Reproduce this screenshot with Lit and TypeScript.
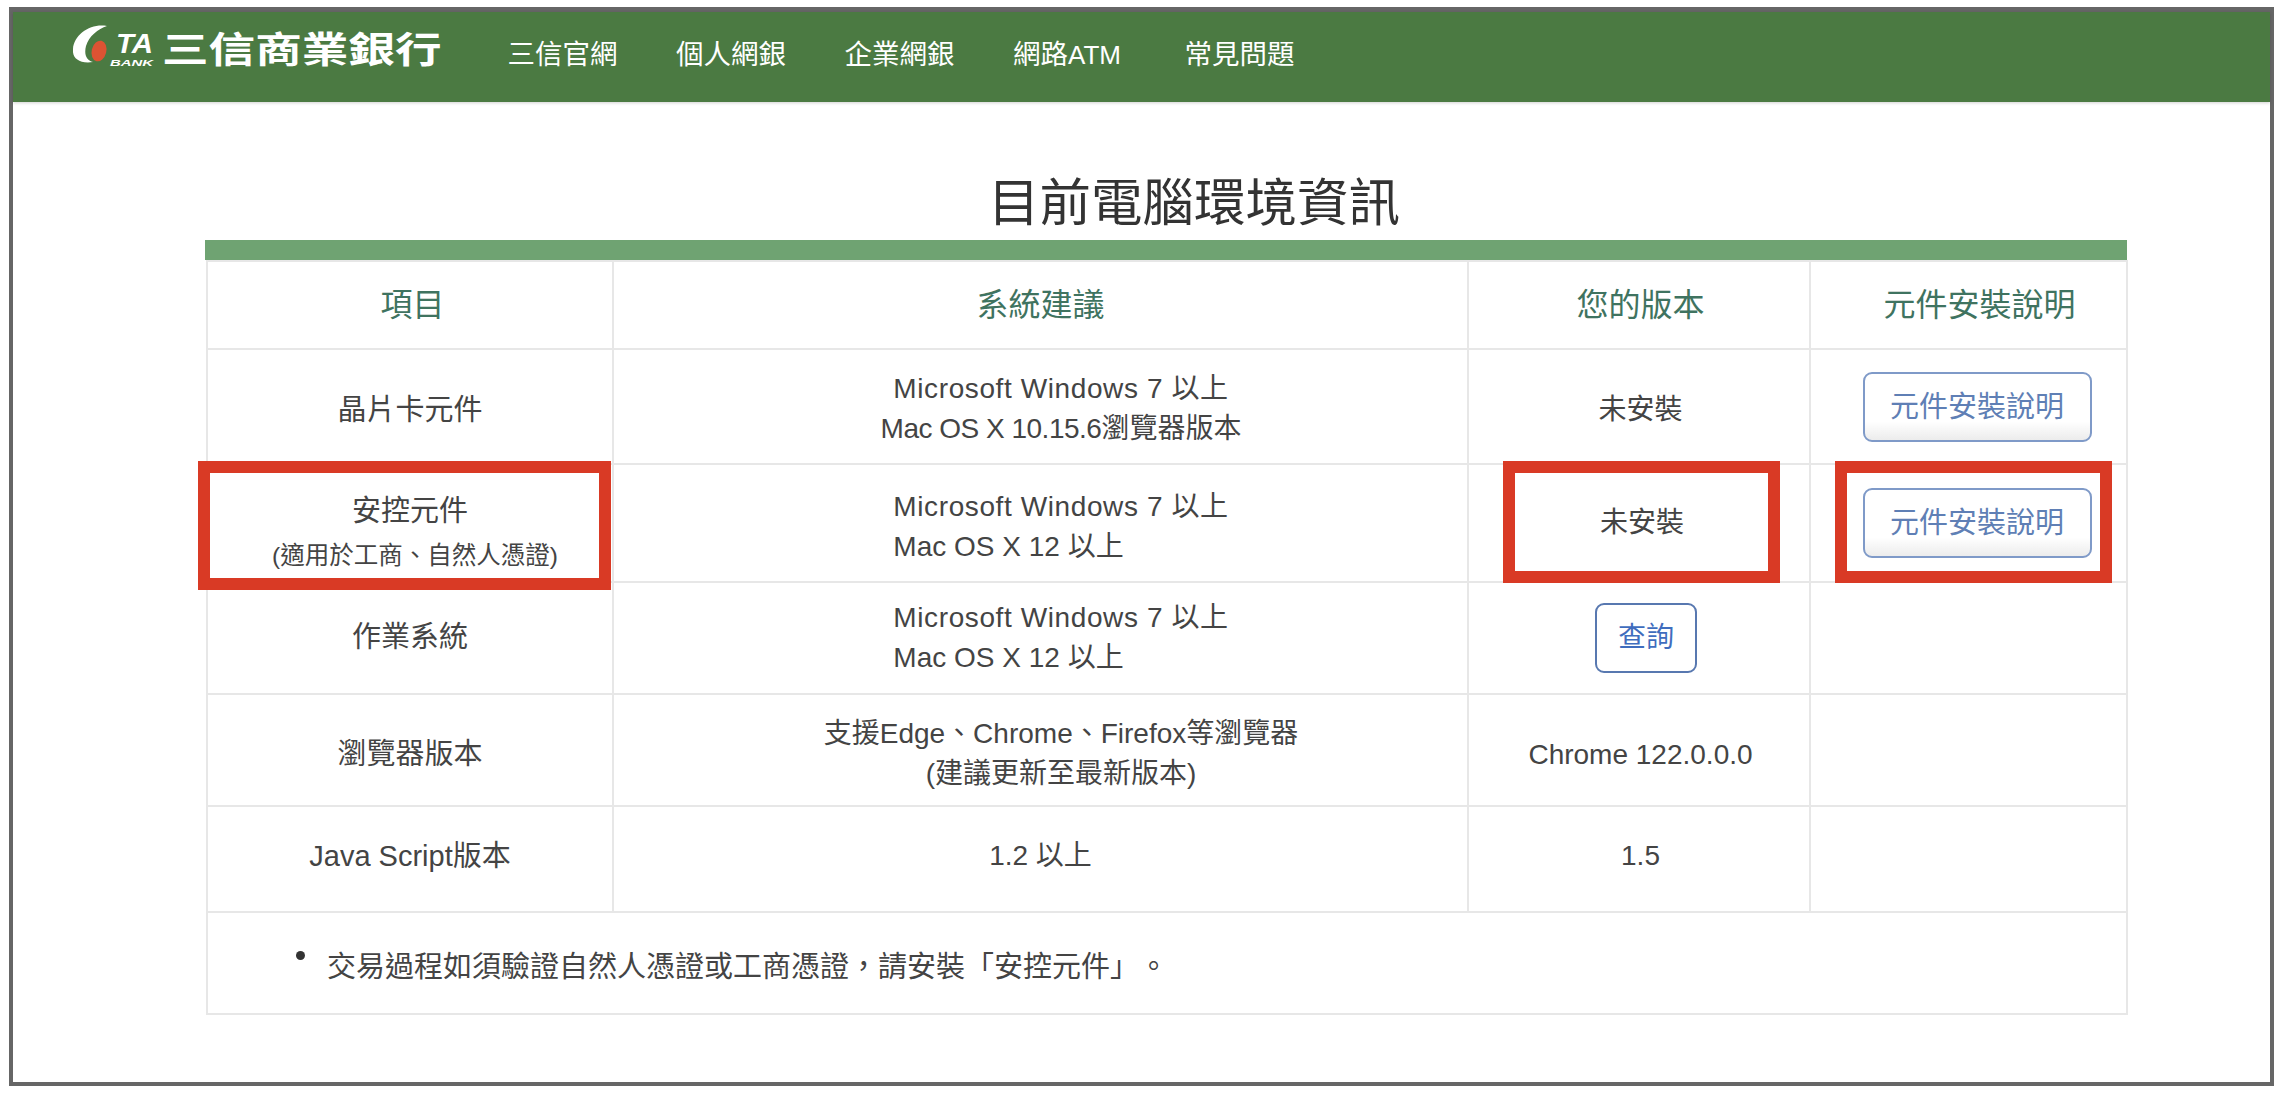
import { LitElement, html, css } from "lit";
import { customElement } from "lit/decorators.js";

@customElement("app-root")
export class AppRoot extends LitElement {
  static styles = css`
    :host {
      display: block;
      width: 2282px;
      height: 1096px;
      background: #fff;
      overflow: hidden;
      font-family: "Liberation Sans", "Noto Sans CJK TC", sans-serif;
      color: #444;
      padding: 7px 8px 0 9px;
      box-sizing: border-box;
      text-spacing-trim: space-all;
    }
    .frame {
      box-sizing: border-box;
      height: 1079px;
      border: 4px solid #666;
      border-top-width: 5px;
      display: flex;
      flex-direction: column;
    }
    header {
      height: 90px;
      flex: none;
      background: #4b7a42;
      box-shadow: 0 1px 3px rgba(0, 0, 0, 0.18);
      display: flex;
      align-items: flex-start;
      padding-left: 60px;
      color: #fff;
    }
    .logo {
      display: block;
      margin-top: 12px;
      flex: none;
    }
    .brand {
      font-family: "Noto Sans CJK TC", sans-serif;
      font-size: 46.6px;
      line-height: 46px;
      font-weight: 700;
      margin: 12px 0 0 7px;
      transform: scaleY(0.78);
      flex: none;
      white-space: nowrap;
    }
    nav {
      display: flex;
      gap: 58.5px;
      margin: 27px 0 0 66px;
      font-size: 27.5px;
      line-height: 32px;
      white-space: nowrap;
    }
    .atm { font-size: 26px; margin-right: 5px; }
    main {
      padding: 64px 143px 0 192px;
    }
    h1 {
      margin: 0;
      height: 74px;
      padding-left: 56px;
      text-align: center;
      font-size: 51.5px;
      line-height: 74px;
      font-weight: 400;
      color: #333;
    }
    .wrap {
      position: relative;
    }
    .bar {
      height: 20px;
      background: #6fa372;
    }
    table {
      width: 1920px;
      margin-left: 1px;
      border-collapse: collapse;
      table-layout: fixed;
      font-size: 28px;
      line-height: 40px;
    }
    .c1 { width: 406px; }
    .c2 { width: 855px; }
    .c3 { width: 342px; }
    .c4 { width: 317px; }
    td, th {
      border: 2px solid #e7e7e7;
      padding: 0;
      text-align: center;
      vertical-align: middle;
    }
    th {
      font-size: 32px;
      font-weight: 400;
      color: #3f7360;
    }
    .h0 { height: 88px; }
    .h1 { height: 115px; }
    .h2 { height: 118px; }
    .h3 { height: 112px; }
    .h4 { height: 106px; }
    .h5 { height: 102px; }
    .name { font-size: 29px; }
    .small {
      display: block;
      font-size: 24.5px;
      line-height: 34px;
      margin-top: 8px;
      padding-left: 10px;
    }
    .th1 { padding-left: 5px; }
    .th3 { padding-left: 3px; }
    .th4 { padding-left: 22px; }
    .ver { padding-left: 3px; }
    .ver-r { padding-left: 6px; }
    .sys { padding-left: 41px; }
    .block { display: inline-block; text-align: left; }
    .ms { letter-spacing: 0.6px; }
    .tight { letter-spacing: -0.5px; }
    .down4 { padding-top: 4px; }
    .down6 { padding-top: 6px; }
    .down8 { padding-top: 8px; }
    .down10 { padding-top: 10px; }
    .down18 { padding-top: 18px; }
    .up6 { padding-bottom: 6px; }
    .up2 { padding-bottom: 2px; }
    button {
      font: inherit;
      background: #fff;
      padding: 0;
      height: 70px;
      border-radius: 9px;
      cursor: pointer;
    }
    .guide {
      width: 229px;
      margin-left: 17px;
      font-size: 29px;
      color: #5f7fb5;
      border: 2px solid #7f9ac8;
      background: linear-gradient(#fff 72%, #ececec);
    }
    .query {
      width: 102px;
      margin-left: 14px;
      font-size: 28px;
      color: #3f6dbe;
      border: 2px solid #5878b0;
    }
    .note {
      text-align: left;
      padding: 8px 0 0 88px;
    }
    .note div {
      display: flex;
      align-items: flex-start;
      gap: 22px;
      line-height: 40px;
      font-size: 29px;
    }
    .dot {
      flex: none;
      width: 9px;
      height: 9px;
      margin-top: 4px;
      border-radius: 50%;
      background: #333;
    }
    .mark {
      position: absolute;
      box-sizing: border-box;
      border: 12.5px solid #d93a25;
      pointer-events: none;
    }
    .m1 { left: -7px; top: 221px; width: 413px; height: 129px; }
    .m2 { left: 1298px; top: 221px; width: 277px; height: 122px; }
    .m3 { left: 1630px; top: 221px; width: 277px; height: 122px; }
  `;

  render() {
    return html`
      <div class="frame">
        <header>
          <svg class="logo" width="82" height="46" viewBox="0 0 82 46">
            <path d="M34 2 C18 -1 1 10 0 25 C-1 34 6 40 20 38 C13 36 11 30 13 22 C16 12 25 5 34 2 Z" fill="#fff"></path>
            <ellipse cx="26" cy="27" rx="7.3" ry="10.5" transform="rotate(14 26 27)" fill="#dd5333"></ellipse>
            <text x="43" y="29" font-family="Liberation Sans" font-size="27.5" font-weight="700" font-style="italic" fill="#fff" textLength="37" lengthAdjust="spacingAndGlyphs">TA</text>
            <text x="37" y="42" font-family="Liberation Sans" font-size="9.5" font-weight="700" font-style="italic" fill="#fff" textLength="43" lengthAdjust="spacingAndGlyphs">BANK</text>
          </svg>
          <div class="brand">三信商業銀行</div>
          <nav>
            <span>三信官網</span>
            <span>個人網銀</span>
            <span>企業網銀</span>
            <span>網路<span class="atm">ATM</span></span>
            <span>常見問題</span>
          </nav>
        </header>
        <main>
          <h1>目前電腦環境資訊</h1>
          <div class="wrap">
            <div class="bar"></div>
            <table>
              <colgroup>
                <col class="c1" /><col class="c2" /><col class="c3" /><col class="c4" />
              </colgroup>
              <tr class="h0">
                <th class="th1">項目</th><th>系統建議</th><th class="th3">您的版本</th><th class="th4">元件安裝說明</th>
              </tr>
              <tr class="h1">
                <td class="name down6">晶片卡元件</td>
                <td class="sys down4"><span class="ms">Microsoft Windows 7 以上</span><br /><span class="tight">Mac OS X 10.15.6</span>瀏覽器版本</td>
                <td class="ver down6">未安裝</td>
                <td><button class="guide">元件安裝說明</button></td>
              </tr>
              <tr class="h2">
                <td class="name down18">安控元件<span class="small">(適用於工商、自然人憑證)</span></td>
                <td class="sys down8"><span class="block"><span class="ms">Microsoft Windows 7 以上</span><br />Mac OS X 12 以上</span></td>
                <td class="ver-r">未安裝</td>
                <td><button class="guide">元件安裝說明</button></td>
              </tr>
              <tr class="h3">
                <td class="name up2">作業系統</td>
                <td class="sys"><span class="block"><span class="ms">Microsoft Windows 7 以上</span><br />Mac OS X 12 以上</span></td>
                <td><button class="query">查詢</button></td>
                <td></td>
              </tr>
              <tr class="h3">
                <td class="name down8">瀏覽器版本</td>
                <td class="sys down8">支援Edge、Chrome、Firefox等瀏覽器<br />(建議更新至最新版本)</td>
                <td class="ver down10">Chrome 122.0.0.0</td>
                <td></td>
              </tr>
              <tr class="h4">
                <td class="name up6">Java Script版本</td>
                <td class="up6">1.2 以上</td>
                <td class="ver up6">1.5</td>
                <td></td>
              </tr>
              <tr class="h5">
                <td class="note" colspan="4">
                  <div><span class="dot"></span><span>交易過程如須驗證自然人憑證或工商憑證\uFF0C請安裝「安控元件」。</span></div>
                </td>
              </tr>
            </table>
            <div class="mark m1"></div>
            <div class="mark m2"></div>
            <div class="mark m3"></div>
          </div>
        </main>
      </div>
    `;
  }
}
